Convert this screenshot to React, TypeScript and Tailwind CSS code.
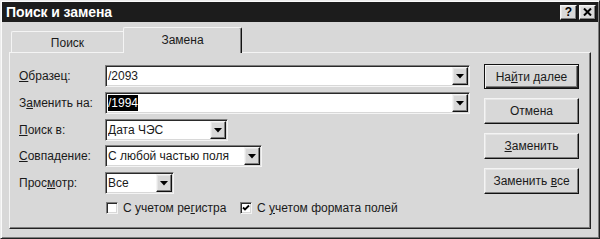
import * as React from 'react';

const raised =
  'border border-t-[#f4f4f4] border-l-[#f4f4f4] border-r-[#111] border-b-[#111] shadow-[inset_-1px_-1px_0_#7e7e7e,inset_1px_1px_0_#e6e6e6]';
const sunken =
  'border border-t-[#7e7e7e] border-l-[#7e7e7e] border-r-[#f4f4f4] border-b-[#f4f4f4] shadow-[inset_1px_1px_0_#2a2a2a,inset_-1px_-1px_0_#d8d8d8]';

function Arrow() {
  return (
    <svg width="8" height="5" viewBox="0 0 8 5" aria-hidden>
      <path d="M0 0H8L4 4.5Z" fill="#000" />
    </svg>
  );
}

function Combo({ className, children }: { className: string; children: React.ReactNode }) {
  return (
    <div className={`h-[22px] bg-white flex items-center pl-[2px] pr-[1px] ${sunken} ${className}`}>
      <div className="flex-1 leading-none whitespace-nowrap overflow-hidden">{children}</div>
      <div className={`w-[16px] h-[18px] bg-[#d8d8d8] flex items-center justify-center ${raised}`}>
        <Arrow />
      </div>
    </div>
  );
}

function Row({ label, children, className = '' }: { label: React.ReactNode; children: React.ReactNode; className?: string }) {
  return (
    <div className={`flex items-center h-[22px] ${className}`}>
      <div className="w-[86px] whitespace-nowrap">{label}</div>
      {children}
    </div>
  );
}

function DlgButton({ children, isDefault }: { children: React.ReactNode; isDefault?: boolean }) {
  const look = isDefault
    ? 'h-[25px] border border-[#111] shadow-[inset_1px_1px_0_#f4f4f4,inset_-1px_-1px_0_#2a2a2a,inset_-2px_-2px_0_#7e7e7e]'
    : `h-[26px] ${raised}`;
  return (
    <button type="button" className={`w-full bg-[#d8d8d8] text-[12px] leading-none text-[#1a1a1a] ${look}`}>
      {children}
    </button>
  );
}

function CheckBox({ checked }: { checked?: boolean }) {
  return (
    <span className={`w-[12px] h-[12px] bg-white flex items-center justify-center ${sunken}`}>
      {checked && (
        <svg width="8" height="8" viewBox="0 0 8 8" aria-hidden>
          <path d="M1 3.5L3 5.5L7 1.5" stroke="#000" strokeWidth="1.8" fill="none" />
        </svg>
      )}
    </span>
  );
}

export default function App() {
  return (
    <div className="w-[600px] h-[239px] bg-[#d8d8d8] border border-t-[#ececec] border-l-[#ececec] border-r-[#222] border-b-[#222] shadow-[inset_1px_1px_0_#fafafa,inset_-1px_-1px_0_#7e7e7e] font-['Liberation_Sans',Arial,sans-serif] text-[12px] text-[#1a1a1a] overflow-hidden">
      {/* Заголовок окна */}
      <div className="mx-[1px] mt-[1px] h-[20px] bg-[#1c1c1c] flex items-center justify-between pl-[4px] pr-[2px]">
        <span className="text-white font-bold text-[14px] tracking-[-0.1px] leading-none">Поиск и замена</span>
        <div className="flex gap-[2px]">
          <span className={`w-[17px] h-[15px] bg-[#d8d8d8] flex items-center justify-center font-bold text-[12px] text-black leading-none ${raised}`}>
            ?
          </span>
          <span className={`w-[17px] h-[15px] bg-[#d8d8d8] flex items-center justify-center ${raised}`}>
            <svg width="9" height="8" viewBox="0 0 9 8" aria-hidden>
              <path d="M1 0.5L8 7.5M8 0.5L1 7.5" stroke="#000" strokeWidth="2" />
            </svg>
          </span>
        </div>
      </div>

      <div className="px-[8px] pt-[5px]">
        {/* Вкладки */}
        <div className="flex items-end h-[25px] pl-[2px]">
          <div className="w-[112px] h-[21px] flex items-center justify-center pt-[1px] border-t border-l border-t-[#f4f4f4] border-l-[#f4f4f4] rounded-tl-[2px]">
            Поиск
          </div>
          <div className="relative z-10 w-[119px] h-[26px] -mb-[1px] bg-[#d8d8d8] flex items-start justify-center pt-[3px] border-t border-l border-r border-t-[#f4f4f4] border-l-[#f4f4f4] border-r-[#111] rounded-t-[2px] shadow-[inset_-1px_0_0_#7e7e7e]">
            Замена
          </div>
        </div>

        {/* Панель */}
        <div className="h-[177px] border border-t-[#f4f4f4] border-l-[#f4f4f4] border-r-[#222] border-b-[#222] shadow-[inset_-1px_-1px_0_#7e7e7e] pl-[9px] pr-[11px] pt-[12px] flex">
          <div className="flex-1">
            <Row label={<><u>О</u>бразец:</>}>
              <Combo className="w-[365px]">/2093</Combo>
            </Row>
            <Row label={<>З<u>а</u>менить на:</>} className="mt-[5px]">
              <Combo className="w-[365px]">
                <span className="bg-black text-white inline-block py-[2px]">/1994</span>
              </Combo>
            </Row>
            <Row label={<><u>П</u>оиск в:</>} className="mt-[5px]">
              <Combo className="w-[123px]">Дата ЧЭС</Combo>
            </Row>
            <Row label={<><u>С</u>овпадение:</>} className="mt-[4px]">
              <Combo className="w-[157px]">С любой частью поля</Combo>
            </Row>
            <Row label={<>Прос<u>м</u>отр:</>} className="mt-[5px]">
              <Combo className="w-[69px]">Все</Combo>
            </Row>
            <div className="flex items-center h-[14px] mt-[7px] pl-[87px]">
              <CheckBox />
              <span className="ml-[5px] w-[117px]">С учетом ре<u>г</u>истра</span>
              <CheckBox checked />
              <span className="ml-[5px]">С <u>у</u>четом формата полей</span>
            </div>
          </div>

          <div className="w-[95px] -mt-[1px] flex flex-col gap-[9px]">
            <DlgButton isDefault>
              На<u>й</u>ти далее
            </DlgButton>
            <DlgButton>Отмена</DlgButton>
            <DlgButton>
              <u>З</u>аменить
            </DlgButton>
            <DlgButton>
              Заменить <u>в</u>се
            </DlgButton>
          </div>
        </div>
      </div>
    </div>
  );
}
